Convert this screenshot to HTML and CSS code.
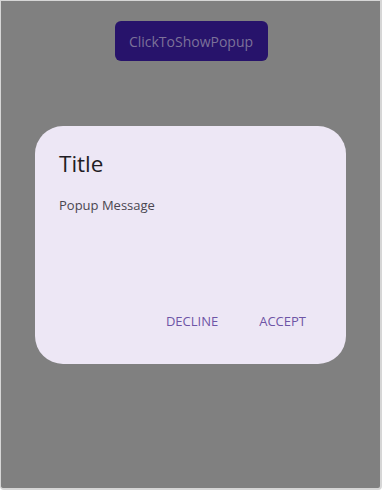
FILE: index.html
```html
<!DOCTYPE html>
<html>
<head>
<meta charset="utf-8">
<link rel="stylesheet" href="styles.css">
</head>
<body>
<div class="window">
  <div class="top">
    <button class="show-btn">ClickToShowPopup</button>
  </div>
  <div class="popup">
    <div class="title">Title</div>
    <div class="message">Popup Message</div>
    <div class="actions">
      <span class="action">DECLINE</span>
      <span class="action">ACCEPT</span>
    </div>
  </div>
</div>
</body>
</html>
```
FILE: styles.css
```css
html, body {
  margin: 0;
  padding: 0;
  width: 382px;
  height: 490px;
  overflow: hidden;
  background: #ffffff;
}
.window {
  box-sizing: border-box;
  width: 382px;
  height: 490px;
  background: #808080;
  border: 1px solid #d6d6d6;
  border-right-width: 2px;
  border-bottom-width: 2px;
  border-radius: 0 0 4px 4px;
  font-family: "Open Sans", "Noto Sans", sans-serif;
  display: flex;
  flex-direction: column;
  align-items: center;
}
.top {
  padding-top: 20px;
  height: 40px;
}
.show-btn {
  height: 40px;
  width: 153px;
  border: none;
  border-radius: 6px;
  background: #27136b;
  color: #7c7199;
  font-family: inherit;
  font-size: 14px;
  padding: 0;
  margin-left: 1px;
}
.popup {
  box-sizing: border-box;
  margin-top: 65px;
  margin-left: 0;
  width: 311px;
  height: 238px;
  background: #ede7f5;
  border-radius: 28px;
  padding: 23px 24px 0 24px;
  display: flex;
  flex-direction: column;
}
.title {
  font-size: 22.5px;
  color: #1f1d24;
  line-height: 30px;
}
.message {
  margin-top: 17px;
  font-size: 13px;
  color: #4a4650;
  line-height: 18px;
}
.actions {
  margin-top: 98px;
  display: flex;
  justify-content: flex-end;
  gap: 41px;
  padding-right: 16px;
}
.action {
  font-size: 13px;
  color: #6e55a6;
  line-height: 18px;
}
```
